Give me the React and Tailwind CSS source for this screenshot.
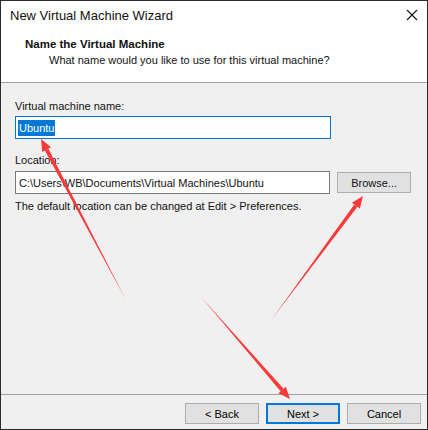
import React from "react";

// Tapered red annotation arrow, from a thin tail to a pointed head.
function Arrow({ x1, y1, x2, y2, w = 4, headLen = 12, headW = 5 }) {
  const dx = x2 - x1;
  const dy = y2 - y1;
  const len = Math.hypot(dx, dy);
  const ux = dx / len;
  const uy = dy / len;
  const nx = -uy;
  const ny = ux;
  const bx = x2 - ux * headLen;
  const by = y2 - uy * headLen;
  const shaft = [
    [x1, y1],
    [bx + nx * (w / 2), by + ny * (w / 2)],
    [bx - nx * (w / 2), by - ny * (w / 2)],
  ];
  const head = [
    [x2, y2],
    [bx + nx * headW, by + ny * headW],
    [bx - nx * headW, by - ny * headW],
  ];
  const pts = (a) => a.map((p) => p.join(",")).join(" ");
  return (
    <g fill="#f83a3a">
      <polygon points={pts(shaft)} />
      <polygon points={pts(head)} />
    </g>
  );
}

function Button({ children, primary }) {
  return (
    <div
      className={
        "w-[74px] h-[21px] flex items-center justify-center bg-[#e1e1e1] text-black " +
        (primary ? "border-2 border-[#0078d7]" : "border border-[#adadad]")
      }
    >
      {children}
    </div>
  );
}

export default function App() {
  return (
    <div className="relative w-[428px] h-[430px] flex flex-col bg-[#f0f0f0] border border-[#2b2b2b] font-['Liberation_Sans',Arial,sans-serif] text-[11px] leading-[16px] text-[#111] overflow-hidden">
      {/* title bar */}
      <div className="h-[29px] shrink-0 bg-white flex items-center justify-between pl-[9px] pr-[9px]">
        <span className="text-[13px] leading-[20px]">New Virtual Machine Wizard</span>
        <svg width="12" height="12" viewBox="0 0 12 12" className="mt-[-1px]">
          <path d="M1 1 L11 11 M11 1 L1 11" stroke="#111" strokeWidth="1.1" fill="none" />
        </svg>
      </div>

      {/* page header */}
      <div className="h-[53px] shrink-0 bg-white border-b border-[#a0a0a0] pt-[6px]">
        <div className="pl-[24px] font-bold text-[11.5px]">Name the Virtual Machine</div>
        <div className="pl-[48px]">What name would you like to use for this virtual machine?</div>
      </div>

      {/* body */}
      <div className="flex-1 flex flex-col pl-[14px] pr-[16px] pt-[15px]">
        <div>Virtual machine name:</div>
        <div className="mt-[2px] w-[316px] h-[23px] border border-[#0078d7] bg-white flex items-center pl-[2px]">
          <span className="bg-[#0078d7] text-white leading-[16px] px-[1px]">Ubuntu</span>
        </div>

        <div className="mt-[13px]">Location:</div>
        <div className="mt-[3px] flex items-center gap-[7px]">
          <div className="w-[316px] h-[23px] border border-[#7a7a7a] bg-white flex items-center pl-[3px]">
            C:\Users\WB\Documents\Virtual Machines\Ubuntu
          </div>
          <div className="w-[74px] h-[21px] flex items-center justify-center bg-[#e1e1e1] border border-[#adadad]">
            Browse...
          </div>
        </div>
        <div className="mt-[4px]">The default location can be changed at Edit &gt; Preferences.</div>
      </div>

      {/* footer */}
      <div className="h-[35px] shrink-0 border-t border-[#a0a0a0] flex justify-end items-start gap-[7px] pt-[8px] pr-[6px]">
        <Button>&lt; Back</Button>
        <Button primary>Next &gt;</Button>
        <Button>Cancel</Button>
      </div>

      {/* annotation arrows */}
      <svg className="absolute left-0 top-0 pointer-events-none" width="428" height="430" viewBox="-1 -1 428 430">
        <Arrow x1={124} y1={298} x2={39} y2={137} />
        <Arrow x1={270} y1={317} x2={361} y2={194} />
        <Arrow x1={200} y1={296} x2={288} y2={397} />
      </svg>
    </div>
  );
}
